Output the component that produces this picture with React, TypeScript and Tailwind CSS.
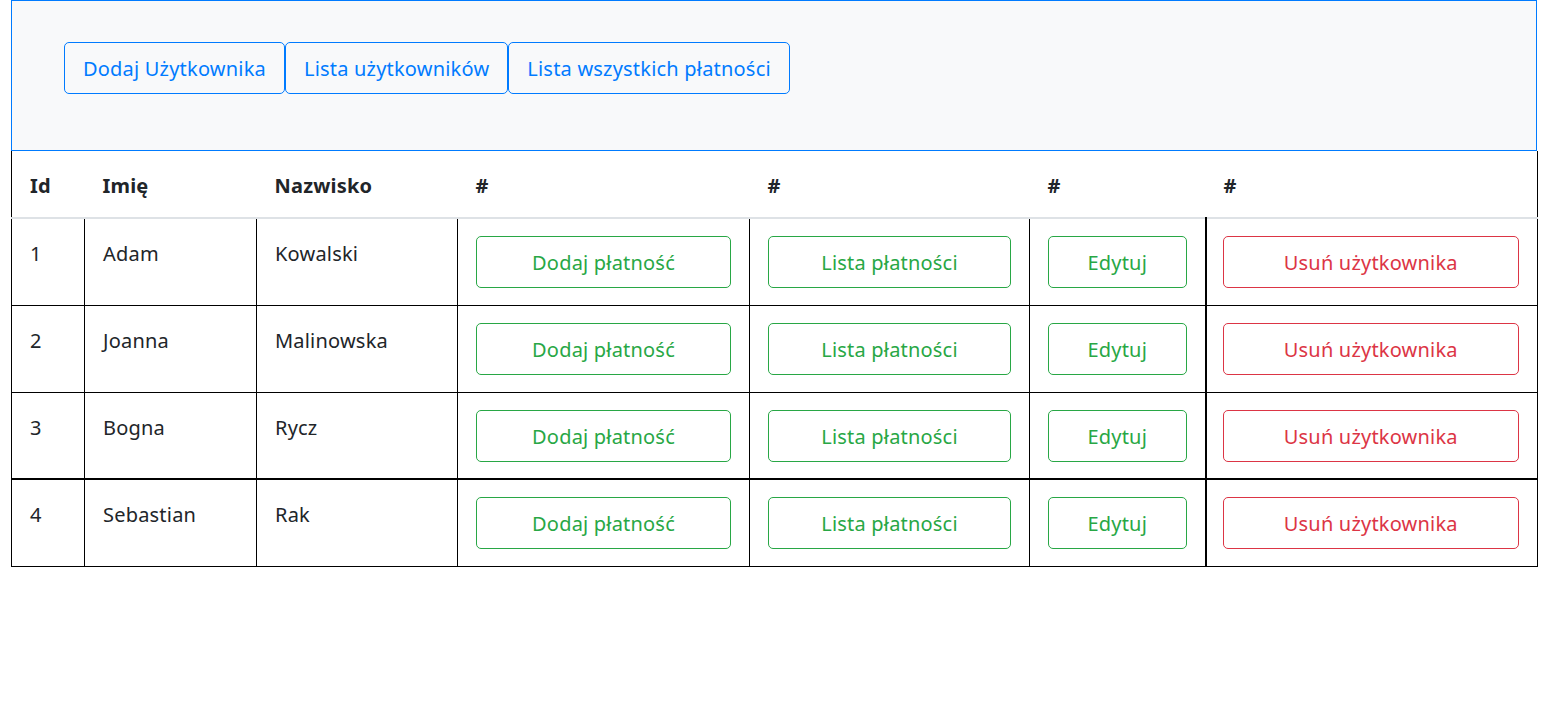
import React from 'react'

const users = [
  { id: 1, first: 'Adam', last: 'Kowalski' },
  { id: 2, first: 'Joanna', last: 'Malinowska' },
  { id: 3, first: 'Bogna', last: 'Rycz' },
  { id: 4, first: 'Sebastian', last: 'Rak' },
]

const greenBtn =
  'w-full h-[52px] pt-[2px] border border-[#28a745] text-[#28a745] rounded-[5px] text-[20px] leading-[30px] bg-white'
const redBtn =
  'w-full h-[52px] pt-[2px] border border-[#dc3545] text-[#dc3545] rounded-[5px] text-[20px] leading-[30px] bg-white'
const navBtn =
  'h-[52px] pt-[2px] px-[18px] border border-[#007bff] rounded-[5px] text-[#007bff] text-[20px] leading-[30px]'

export default function App() {
  return (
    <div className="bg-white min-h-[724px] pl-[11px] text-[#212529] tracking-[0.2px] font-['Segoe_UI','Noto_Sans',sans-serif]">
      <nav className="w-[1526px] h-[151px] bg-[#f8f9fa] border border-[#007bff] pt-[41px] pl-[52px]">
        <div className="flex">
          <button className={navBtn}>Dodaj Użytkownika</button>
          <button className={navBtn}>Lista użytkowników</button>
          <button className={navBtn}>Lista wszystkich płatności</button>
        </div>
      </nav>
      <table className="w-[1526px] border-collapse table-fixed text-[20px] leading-[30px]">
        <colgroup>
          <col className="w-[73px]" />
          <col className="w-[172px]" />
          <col className="w-[201px]" />
          <col className="w-[292px]" />
          <col className="w-[280px]" />
          <col className="w-[176px]" />
          <col className="w-[332px]" />
        </colgroup>
        <thead>
          <tr className="border-x border-black border-b-2 border-b-[#dee2e6]">
            <th className="text-left font-bold px-[18px] pt-[20px] pb-[16px] h-[66px]">Id</th>
            <th className="text-left font-bold px-[18px] pt-[20px] pb-[16px]">Imię</th>
            <th className="text-left font-bold px-[18px] pt-[20px] pb-[16px]">Nazwisko</th>
            <th className="text-left font-bold px-[18px] pt-[20px] pb-[16px]">#</th>
            <th className="text-left font-bold px-[18px] pt-[20px] pb-[16px]">#</th>
            <th className="text-left font-bold px-[18px] pt-[20px] pb-[16px]">#</th>
            <th className="text-left font-bold px-[18px] pt-[20px] pb-[16px]">#</th>
          </tr>
        </thead>
        <tbody>
          {users.map((u) => {
            const b = u.id === 4 ? 'border border-black border-t-2' : 'border border-black'
            return (
              <tr key={u.id} className="h-[87px]">
                <td className={`${b} align-top px-[18px] pt-[20px]`}>{u.id}</td>
                <td className={`${b} align-top px-[18px] pt-[20px]`}>{u.first}</td>
                <td className={`${b} align-top px-[18px] pt-[20px]`}>{u.last}</td>
                <td className={`${b} align-top px-[18px] pt-[17px]`}>
                  <button className={greenBtn}>Dodaj płatność</button>
                </td>
                <td className={`${b} align-top px-[18px] pt-[17px]`}>
                  <button className={greenBtn}>Lista płatności</button>
                </td>
                <td className={`${b} align-top px-[18px] pt-[17px]`}>
                  <button className={greenBtn}>Edytuj</button>
                </td>
                <td className={`${b} border-l-2 align-top pl-[16px] pr-[18px] pt-[17px]`}>
                  <button className={redBtn}>Usuń użytkownika</button>
                </td>
              </tr>
            )
          })}
        </tbody>
      </table>
    </div>
  )
}
